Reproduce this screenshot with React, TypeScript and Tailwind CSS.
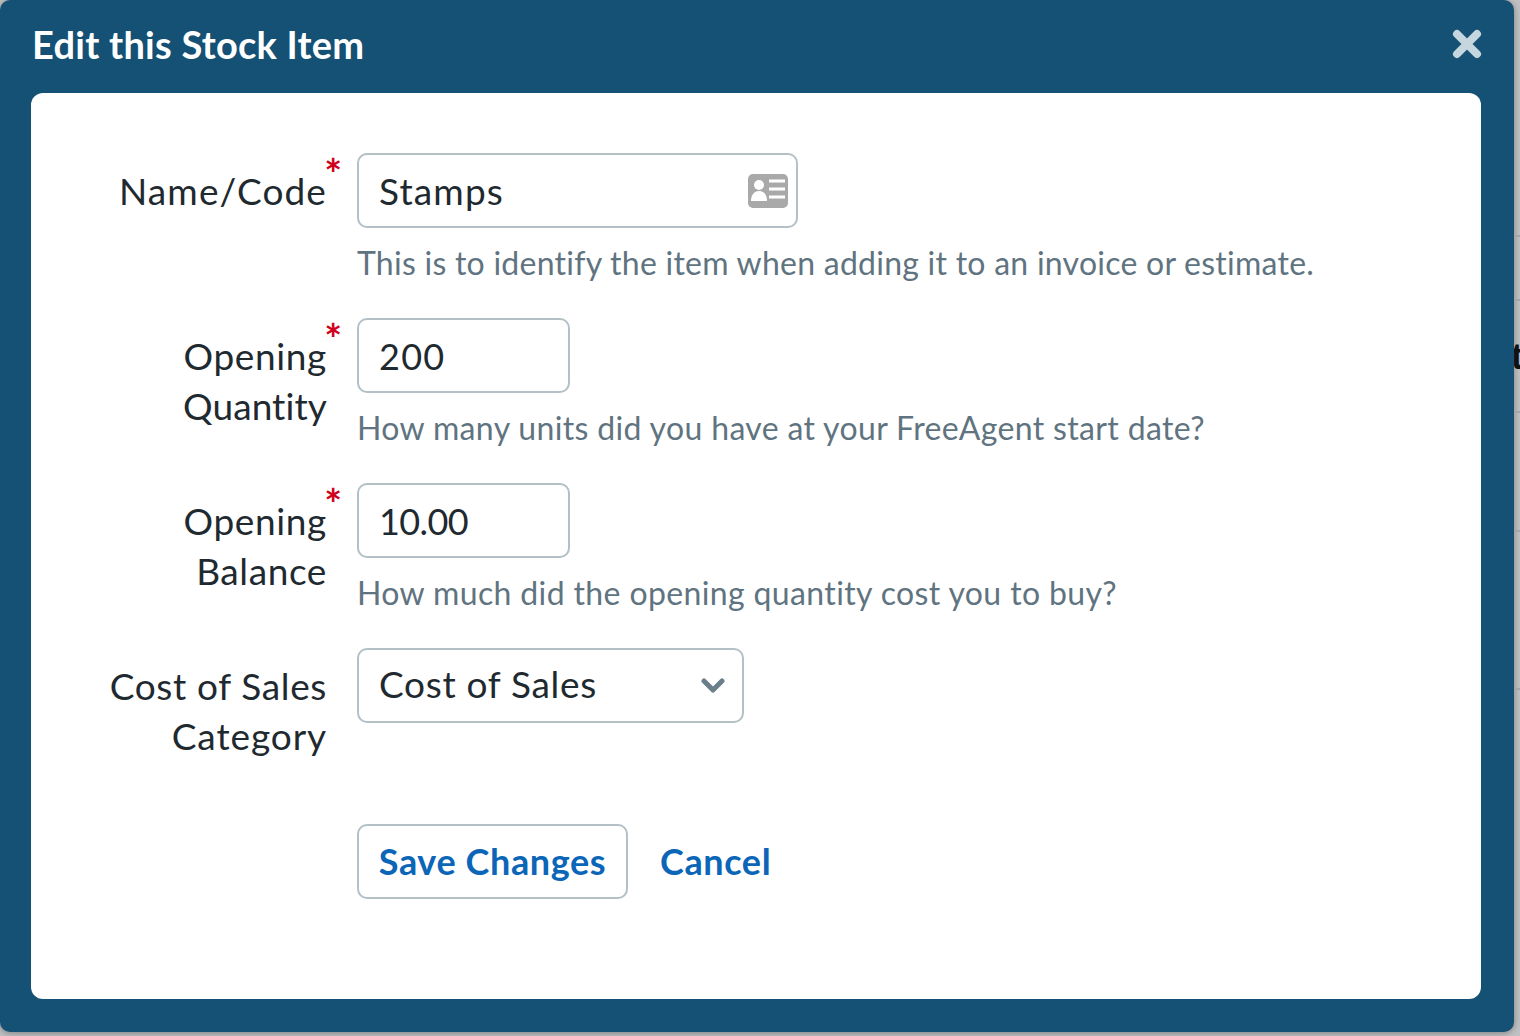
import React from "react";

const F = "font-['Lato','Noto_Sans',sans-serif]";

function Label({ lines, required }: { lines: [string, string][]; required?: boolean }) {
  return (
    <div className="relative w-[327px] shrink-0 pt-[13px] text-right text-[37px] leading-[50px] text-[#1f2a30]">
      {lines.map(([l, cls]) => (
        <div key={l} className={cls}>{l}</div>
      ))}
      {required && (
        <span className="absolute right-[-15px] top-[-4px] text-[42px] font-bold leading-[50px] text-[#d0021b]">*</span>
      )}
    </div>
  );
}

function Field({ lines, required, help, helpCls, children }: { lines: [string, string][]; required?: boolean; help?: string; helpCls?: string; children: React.ReactNode }) {
  return (
    <div className="flex h-[165px] gap-[30px]">
      <Label lines={lines} required={required} />
      <div className="flex flex-col items-start">
        {children}
        {help && <div className={`mt-[10px] text-[32px] leading-[50px] text-[#5f7480] ${helpCls}`}>{help}</div>}
      </div>
    </div>
  );
}

function Input({ w, children }: { w: string; children: React.ReactNode }) {
  return (
    <div className={`${w} flex h-[75px] items-center justify-between rounded-[10px] border-2 border-[#b3c0c5] bg-white pl-[20px] pr-[8px] text-[36px] text-[#1f2a30]`}>
      {children}
    </div>
  );
}

export default function App() {
  return (
    <div className={`${F} flex h-[1036px] w-[1520px] overflow-hidden bg-[#bfc1c3]`}>
      <div className="flex h-[1032px] w-[1514px] shrink-0 flex-col rounded-[10px] bg-[#145174] shadow-[0_1px_6px_rgba(0,0,0,0.35)]">
        <div className="flex h-[93px] shrink-0 items-center justify-between pb-[5px] pl-[32px] pr-[31px]">
          <h1 className="text-[38px] font-bold leading-none tracking-[0.25px] text-white">Edit this Stock Item</h1>
          <svg width="32" height="32" viewBox="0 0 32 32" className="mb-[1px]">
            <path d="M6 6 L26 26 M26 6 L6 26" stroke="#c6d6df" strokeWidth="8" strokeLinecap="round" />
          </svg>
        </div>
        <div className="mx-[31px] h-[906px] w-[1450px] rounded-[12px] bg-white pt-[60px]">
          <div className="ml-[-31px]">
            <Field lines={[["Name/Code", "tracking-[1.1px]"]]} required help="This is to identify the item when adding it to an invoice or estimate." helpCls="tracking-[0.25px]">
              <Input w="w-[441px]">
                <span className="text-[37px] tracking-[1.15px]">Stamps</span>
                <svg width="40" height="34" viewBox="0 0 40 34">
                  <rect width="40" height="34" rx="5" fill="#a9a9a9" />
                  <circle cx="11" cy="11" r="5" fill="#fff" />
                  <path d="M3 27 C3 20 7 17 11 17 C15 17 19 20 19 27 Z" fill="#fff" />
                  <path d="M21 7 H37 M21 15 H37 M21 23 H37" stroke="#fff" strokeWidth="3" />
                </svg>
              </Input>
            </Field>
            <Field lines={[["Opening", "tracking-[0.65px]"], ["Quantity", "tracking-[0.1px]"]]} required help="How many units did you have at your FreeAgent start date?" helpCls="tracking-[0.35px]">
              <Input w="w-[213px]"><span className="tracking-[1.3px]">200</span></Input>
            </Field>
            <Field lines={[["Opening", "tracking-[0.65px]"], ["Balance", "tracking-[0.6px]"]]} required help="How much did the opening quantity cost you to buy?" helpCls="tracking-[0.37px]">
              <Input w="w-[213px]"><span className="tracking-[-0.6px]">10.00</span></Input>
            </Field>
            <Field lines={[["Cost of Sales", "tracking-[0.65px]"], ["Category", "tracking-[0.9px]"]]}>
              <Input w="w-[387px]">
                <span className="mt-[-3px] text-[37px] tracking-[0.7px]">Cost of Sales</span>
                <svg width="24" height="16" viewBox="0 0 24 16" className="mr-[9px]">
                  <path d="M3 3 L12 12 L21 3" fill="none" stroke="#6b7f8b" strokeWidth="5" strokeLinecap="round" strokeLinejoin="round" />
                </svg>
              </Input>
            </Field>
            <div className="ml-[357px] mt-[11px] flex items-center gap-[32px] text-[36px] font-bold tracking-[0.6px] text-[#0b66b8]">
              <button className="h-[75px] w-[271px] rounded-[10px] border-2 border-[#b3c0c5] bg-white pb-[2px]">Save Changes</button>
              <span className="pb-[2px]">Cancel</span>
            </div>
          </div>
        </div>
      </div>
      <div className="flex h-[1036px] w-[6px] shrink-0 flex-col">
        <div className="mt-[235px] h-[2px] bg-[#a4a7a9]" />
        <div className="mt-[62px] h-[2px] bg-[#a4a7a9]" />
        <div className="mt-[41px] h-[30px] w-[6px] overflow-hidden font-['Liberation_Sans',sans-serif] text-[36px] font-bold leading-[30px] text-[#111]">
          <span className="ml-[-3px] block">t</span>
        </div>
        <div className="mt-[39px] h-[2px] bg-[#a4a7a9]" />
        <div className="mt-[117px] h-[2px] bg-[#a4a7a9]" />
        <div className="mt-[156px] h-[2px] bg-[#a4a7a9]" />
      </div>
    </div>
  );
}
